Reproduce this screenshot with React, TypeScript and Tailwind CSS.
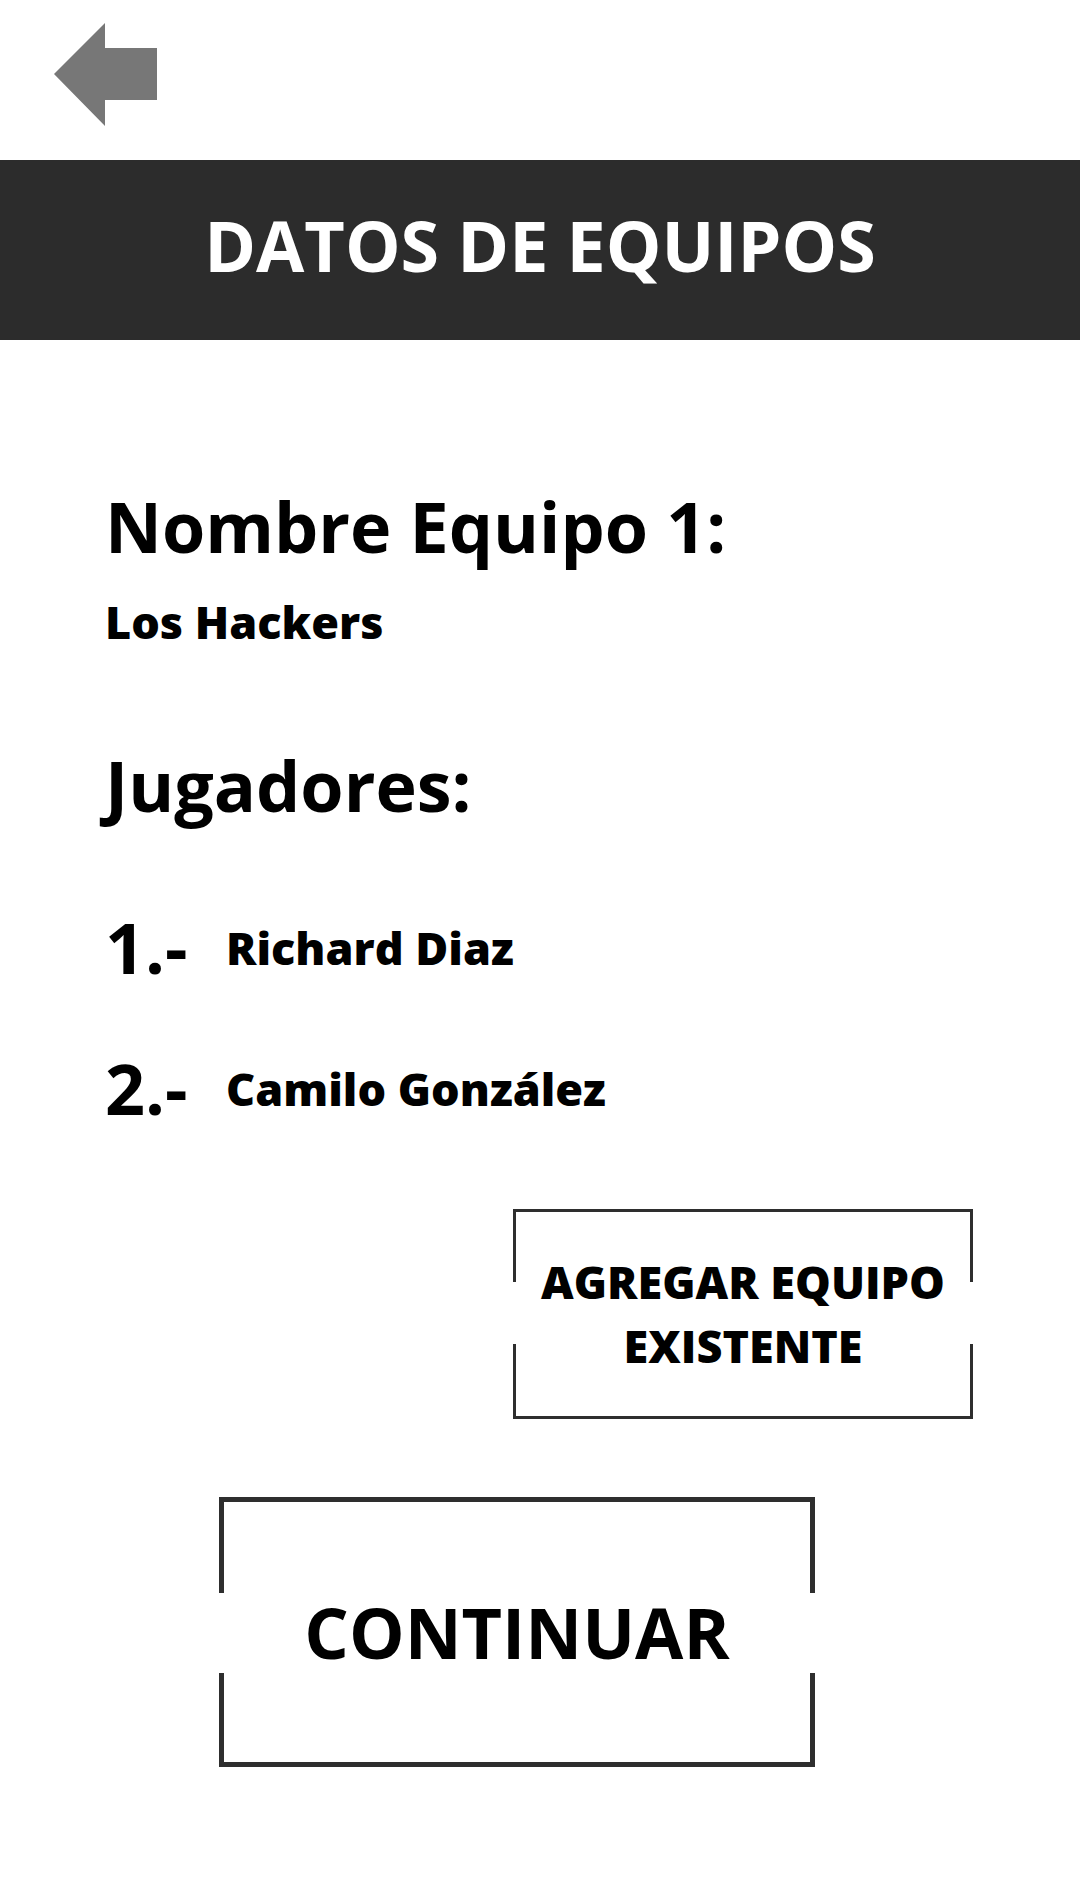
import React from "react";

const font = { fontFamily: '"Open Sans", "Noto Sans", sans-serif' };

function BackArrow() {
  return (
    <svg width="104" height="104" viewBox="0 0 104 104" className="block">
      <polygon points="0,51 51,0 51,25 103,25 103,77 51,77 51,103" fill="#777777" />
    </svg>
  );
}

/* framed button: full top/bottom border, side borders broken in the middle */
function FramedButton({
  className,
  side,
  topSeg,
  bottomSeg,
  children,
}: {
  className: string;
  side: string;
  topSeg: string;
  bottomSeg: string;
  children: React.ReactNode;
}) {
  return (
    <div className={`flex border-[#2e2e2e] ${className}`}>
      <div className={`flex flex-col justify-between ${side}`}>
        <div className={`bg-[#2e2e2e] ${topSeg}`} />
        <div className={`bg-[#2e2e2e] ${bottomSeg}`} />
      </div>
      <div className="flex-1 flex items-center justify-center text-center">{children}</div>
      <div className={`flex flex-col justify-between ${side}`}>
        <div className={`bg-[#2e2e2e] ${topSeg}`} />
        <div className={`bg-[#2e2e2e] ${bottomSeg}`} />
      </div>
    </div>
  );
}

export default function App() {
  const players = ["Richard Diaz", "Camilo González"];

  return (
    <div className="w-[1080px] min-h-[1900px] bg-white text-black" style={font}>
      {/* top bar with back arrow */}
      <div className="h-[160px] pl-[54px] pt-[23px]">
        <BackArrow />
      </div>

      {/* title band */}
      <div className="h-[180px] bg-[#2c2c2c] flex items-center justify-center pb-[10px]">
        <h1 className="text-[70px] leading-none font-bold text-white">DATOS DE EQUIPOS</h1>
      </div>

      <div className="pl-[105px] pt-[151px]">
        <p className="text-[70px] leading-none font-bold">Nombre Equipo 1:</p>
        <p className="mt-[38px] text-[45px] leading-none font-extrabold">Los Hackers</p>

        <p className="mt-[106px] text-[70px] leading-none font-bold">Jugadores:</p>

        <div className="mt-[92px] flex flex-col gap-[71px]">
          {players.map((name, i) => (
            <div key={name} className="flex items-start h-[70px]">
              <span className="w-[121px] text-[70px] leading-none font-bold">{i + 1}.-</span>
              <span className="mt-[13px] text-[45px] leading-none font-extrabold">{name}</span>
            </div>
          ))}
        </div>
      </div>

      <div className="mt-[86px] flex justify-end pr-[107px]">
        <FramedButton
          className="w-[460px] h-[210px] border-y-[3px]"
          side="w-[3px]"
          topSeg="h-[70px]"
          bottomSeg="h-[72px]"
        >
          <span className="text-[45px] leading-[64px] font-extrabold">
            AGREGAR EQUIPO
            <br />
            EXISTENTE
          </span>
        </FramedButton>
      </div>

      <div className="mt-[78px] pl-[219px]">
        <FramedButton
          className="w-[596px] h-[270px] border-y-[5px]"
          side="w-[5px]"
          topSeg="h-[91px]"
          bottomSeg="h-[89px]"
        >
          <span className="text-[70px] leading-none font-bold">CONTINUAR</span>
        </FramedButton>
      </div>
    </div>
  );
}
